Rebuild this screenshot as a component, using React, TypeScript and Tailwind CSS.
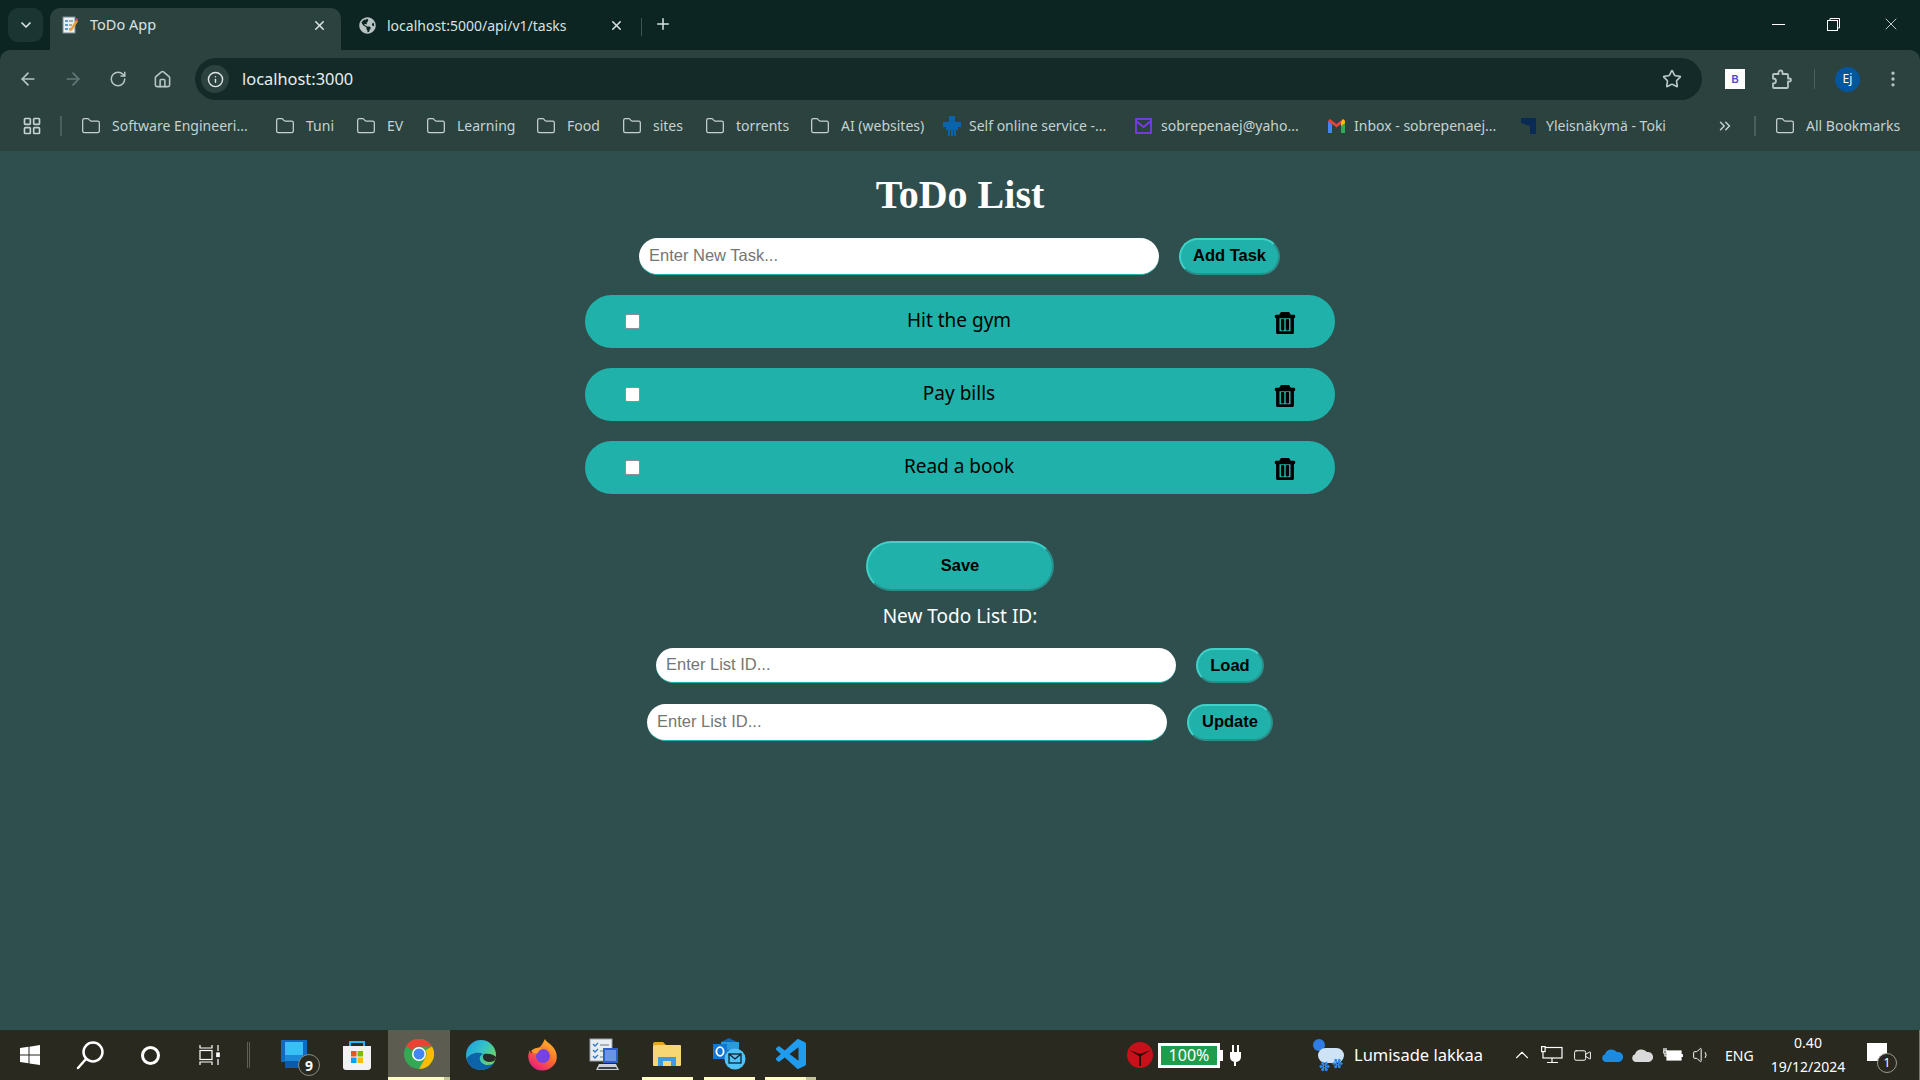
import { ArrowLeft, ArrowRight, ChevronDown, ChevronUp, ChevronsRight, Folder, Home, Info, LayoutGrid, MoreVertical, Plus, RotateCw, Snowflake, Star, Volume1, Video, X } from 'lucide-react';
import { FaGlobeAmericas, FaRegTrashAlt } from 'react-icons/fa';

const bookmarks = [
  { label: 'Software Engineeri...', width: 'w-[194px]' },
  { label: 'Tuni', width: 'w-[81px]' },
  { label: 'EV', width: 'w-[70px]' },
  { label: 'Learning', width: 'w-[110px]' },
  { label: 'Food', width: 'w-[86px]' },
  { label: 'sites', width: 'w-[83px]' },
  { label: 'torrents', width: 'w-[105px]' },
  { label: 'AI (websites)', width: 'w-[133px]' },
];

const tasks = ['Hit the gym', 'Pay bills', 'Read a book'];

const segoe = "font-['Noto_Sans',sans-serif]";
const arial = "font-['Liberation_Sans',Arial,sans-serif]";

function OutsetButton({ label, size }: { label: string; size: string }) {
  return (
    <button className={`${size} shrink-0 rounded-[20px] border-2 border-t-[#3fd0c8] border-l-[#3fd0c8] border-r-[#2a8f8a] border-b-[#2a8f8a] bg-[#20b2aa] pb-[1px] text-[16.5px] font-bold text-black ${arial}`}>
      {label}
    </button>
  );
}

function TextField({ placeholder, size }: { placeholder: string; size: string }) {
  return (
    <input
      placeholder={placeholder}
      className={`${size} shrink-0 rounded-[20px] border-b border-[#20b2aa] bg-white px-[10px] pb-[2px] text-[16.5px] text-black outline-none placeholder:text-[#757575] ${arial}`}
    />
  );
}

function Favicon() {
  return (
    <svg width="18" height="18" viewBox="0 0 18 18">
      <rect x="2" y="1" width="12" height="16" fill="#e8eef2" stroke="#7d8a96" />
      <path d="M4 5h3M4 9h3M4 13h3" stroke="#2f7fc4" strokeWidth="1.5" />
      <path d="M8 5h4M8 9h3M8 13h3" stroke="#5a6672" />
      <path d="M9 13l6-9 2 1.500-6 9-2.500 1z" fill="#e9a23b" />
      <path d="M14.500 3.500l1-1.500 2 1.500-1 1.500z" fill="#d8447a" />
    </svg>
  );
}

function WindowsLogo() {
  return (
    <svg width="20" height="20" viewBox="0 0 20 20" fill="#fff">
      <path d="M0 3l8.500-1.200v7.800H0zM9.500 1.700L20 0v9.600H9.500zM0 10.500h8.500v7.800L0 17zM9.500 10.500H20V20L9.500 18.400z" />
    </svg>
  );
}

function ChromeLogo() {
  return (
    <svg width="30" height="30" viewBox="0 0 30 30">
      <circle cx="15" cy="15" r="15" fill="#34a853" />
      <path d="M15 0a15 15 0 0 1 13 7.500H15a7.500 7.500 0 0 0-6.500 3.750L2 7A15 15 0 0 1 15 0z" fill="#ea4335" />
      <path d="M28 7.500A15 15 0 0 1 15 30l6.500-11.250A7.500 7.500 0 0 0 21.500 11.250z" fill="#fbbc04" />
      <circle cx="15" cy="15" r="7" fill="#fff" />
      <circle cx="15" cy="15" r="5.500" fill="#4285f4" />
    </svg>
  );
}

function EdgeLogo() {
  return (
    <svg width="30" height="30" viewBox="0 0 30 30">
      <defs>
        <linearGradient id="edgeTop" x1="0" y1="0" x2="1" y2="0.6">
          <stop offset="0" stopColor="#1b9de2" />
          <stop offset="0.55" stopColor="#35c1c8" />
          <stop offset="1" stopColor="#6fd858" />
        </linearGradient>
      </defs>
      <circle cx="15" cy="15" r="15" fill="url(#edgeTop)" />
      <path d="M1 18c0 8 7 12 14 12 5 0 10-2 13-7-4 3-12 3-14-3-1-3 1-5 3-6-6-3-13 0-16 4z" fill="#0c63a8" />
      <path d="M18 14c6-1 10 1 12 3 0 1-1 3-2 4-4 2-10 1-11-3-.4-2 .3-3 1-4z" fill="#29292a" />
    </svg>
  );
}

function FirefoxLogo() {
  return (
    <svg width="30" height="32" viewBox="0 0 30 32">
      <defs>
        <linearGradient id="ffBody" x1="0.8" y1="0" x2="0.2" y2="1">
          <stop offset="0" stopColor="#ffbd2e" />
          <stop offset="0.5" stopColor="#ff6a2b" />
          <stop offset="1" stopColor="#e31587" />
        </linearGradient>
      </defs>
      <path d="M17 0c1 3 5 4 8 8 5 6 5 14 0 19-6 6-16 6-21 0C0 23-1 16 2 11c0 2 1 3 2 3 1-3 3-4 5-5 3 0 5-3 8-9z" fill="url(#ffBody)" />
      <circle cx="15" cy="17" r="7" fill="#7542e5" />
      <path d="M3 12c4-4 9-4 11-2-2 1-4 2-4 4-3 1-5 0-7-2z" fill="#ff9a2e" />
    </svg>
  );
}

function TaskManagerIcon() {
  return (
    <svg width="32" height="34" viewBox="0 0 32 34">
      <rect x="1" y="1" width="22" height="22" fill="#e9edf2" stroke="#9aa3ad" />
      <path d="M4 6l2 2 3-3M4 12l2 2 3-3M4 18l2 2 3-3" stroke="#2d76c9" strokeWidth="1.300" fill="none" />
      <path d="M11 7h9M11 13h5M11 19h4" stroke="#6c7682" />
      <path d="M14 10h15v15H14z" fill="#2f5fc8" />
      <path d="M16 12h11v11H16z" fill="#6a94e6" />
      <path d="M10 26h17l3 6H7z" fill="#ccd2d8" />
      <path d="M10 29h17l1 2H9z" fill="#3b3f46" />
    </svg>
  );
}

function ExplorerIcon() {
  return (
    <svg width="28" height="24" viewBox="0 0 28 24">
      <path d="M0 2a2 2 0 0 1 2-2h8l3 3h-13z" fill="#e2a91d" />
      <rect y="3" width="28" height="21" rx="1" fill="#f7d774" />
      <path d="M5 24v-9h18v9h-5v-5h-8v5z" fill="#3f9ce0" />
    </svg>
  );
}

function OutlookIcon() {
  return (
    <svg width="33" height="32" viewBox="0 0 33 32">
      <path d="M8 4l8-4 10 5v14H8z" fill="#0f67b8" />
      <path d="M8 4h9v8H8zM17 4h9v8h-9z" fill="#2a9ad8" />
      <rect x="0" y="6" width="14" height="15" fill="#0f78d4" />
      <ellipse cx="7" cy="13.500" rx="3.600" ry="4.300" fill="none" stroke="#fff" strokeWidth="1.800" />
      <circle cx="22" cy="21" r="10.500" fill="#4fc3f7" />
      <rect x="16" y="16" width="12" height="9" fill="none" stroke="#10202c" strokeWidth="1.300" />
      <path d="M16 16l6 5 6-5" fill="none" stroke="#10202c" strokeWidth="1.300" />
    </svg>
  );
}

function VsCodeIcon() {
  return (
    <svg width="30" height="30" viewBox="0 0 24 24">
      <path fill="#1f9cf0" d="M23.15 2.587L18.21.21a1.494 1.494 0 0 0-1.705.29l-9.46 8.63-4.12-3.128a.999.999 0 0 0-1.276.057L.327 7.261A1 1 0 0 0 .326 8.74L3.899 12 .326 15.26a1 1 0 0 0 .001 1.479L1.65 17.94a.999.999 0 0 0 1.276.057l4.12-3.128 9.46 8.63a1.492 1.492 0 0 0 1.704.29l4.942-2.377A1.5 1.500 0 0 0 24 20.06V3.939a1.5 1.500 0 0 0-.85-1.352zm-5.146 14.861L10.826 12l7.178-5.448v10.896z" />
    </svg>
  );
}

function StoreIcon() {
  return (
    <svg width="30" height="30" viewBox="0 0 30 30">
      <path d="M8 7V2h14v5" fill="none" stroke="#29b6f6" strokeWidth="2" />
      <path d="M1 6h28v21a3 3 0 0 1-3 3H4a3 3 0 0 1-3-3z" fill="#f2f2f2" />
      <rect x="9" y="11" width="5.500" height="5.500" fill="#f25022" />
      <rect x="15.500" y="11" width="5.500" height="5.500" fill="#7fba00" />
      <rect x="9" y="17.500" width="5.500" height="5.500" fill="#00a4ef" />
      <rect x="15.500" y="17.500" width="5.500" height="5.500" fill="#ffb900" />
    </svg>
  );
}

function PhoneIcon() {
  return (
    <div className="relative ml-[10px] h-[30px] w-[40px]">
      <svg width="28" height="28" viewBox="0 0 28 28">
        <rect x="1" y="0" width="26" height="22" fill="#0f6cbd" />
        <rect x="5" y="2" width="18" height="26" fill="#0a5ca8" />
        <rect x="5" y="2" width="18" height="13" fill="#38c0f5" />
        <rect x="5" y="15" width="18" height="6" fill="#1a8ad8" />
      </svg>
      <span className={`absolute right-0 bottom-[-6px] flex h-[22px] w-[22px] items-center justify-center rounded-full border border-[#8c8c84] bg-[#29291f] text-[14px] font-bold text-white ${segoe}`}>9</span>
    </div>
  );
}

function Taskbar() {
  return (
    <div className={`flex h-[50px] shrink-0 items-center border-r border-r-[#77786c] bg-[#29291f] text-white ${segoe}`}>
      <div className="flex h-full w-[60px] items-center justify-center"><WindowsLogo /></div>
      <div className="flex h-full w-[60px] items-center justify-center">
        <svg width="30" height="30" viewBox="0 0 30 30" fill="none" stroke="#fff" strokeWidth="2.500">
          <circle cx="18" cy="12" r="9.500" />
          <path d="M11 19l-8 9" strokeLinecap="round" />
        </svg>
      </div>
      <div className="flex h-full w-[60px] items-center justify-center">
        <div className="h-[19px] w-[19px] rounded-full border-[3px] border-white" />
      </div>
      <div className="flex h-full w-[60px] items-center justify-center">
        <svg width="22" height="20" viewBox="0 0 22 20" fill="none" stroke="#fff" strokeWidth="1.200">
          <path d="M1 0v3h12V0M1 20v-3h12v3" />
          <rect x="1" y="5.500" width="12" height="9" />
          <path d="M19 0v6M19 14v6" />
          <rect x="17.800" y="8" width="2.400" height="3.500" fill="#fff" />
        </svg>
      </div>
      <div className="flex h-full w-[24px] items-center"><div className="ml-[7px] h-[26px] w-[3px] border-x border-x-[#5f6056]" /></div>
      <div className="flex h-full w-[62px] items-center justify-center"><PhoneIcon /></div>
      <div className="flex h-full w-[62px] items-center justify-center"><StoreIcon /></div>
      <div className="flex h-full w-[62px] flex-col bg-[#5c5d50]">
        <div className="flex flex-1 items-center justify-center"><ChromeLogo /></div>
        <div className="flex h-[3px]"><div className="h-full w-[56px] bg-[#fdfdc4]" /><div className="h-full flex-1 bg-[#c4c49a]" /></div>
      </div>
      <div className="flex h-full w-[62px] items-center justify-center"><EdgeLogo /></div>
      <div className="flex h-full w-[62px] items-center justify-center"><FirefoxLogo /></div>
      <div className="flex h-full w-[62px] items-center justify-center"><TaskManagerIcon /></div>
      <div className="flex h-full w-[62px] flex-col items-center">
        <div className="flex flex-1 items-center justify-center"><ExplorerIcon /></div>
        <div className="h-[3px] w-[51px] bg-[#fdfdc4]" />
      </div>
      <div className="flex h-full w-[62px] flex-col items-center">
        <div className="flex flex-1 items-center justify-center"><OutlookIcon /></div>
        <div className="h-[3px] w-[51px] bg-[#fdfdc4]" />
      </div>
      <div className="flex h-full w-[62px] flex-col">
        <div className="flex flex-1 items-center justify-center"><VsCodeIcon /></div>
        <div className="ml-[5px] flex h-[3px]"><div className="h-full w-[41px] bg-[#fdfdc4]" /><div className="h-full w-[10px] bg-[#c4c49a]" /></div>
      </div>

      <div className="ml-[305px] flex h-[26px] w-[26px] items-center justify-center rounded-full bg-[#c8101a]">
        <svg width="26" height="26" viewBox="0 0 26 26"><path d="M2 8l11 4 11-4-10 6v10h-2V14z" fill="#2a0a0a" /></svg>
      </div>
      <div className="ml-[5px] flex h-[25px] w-[62px] items-center justify-center border-[3px] border-white bg-[#1f9d4d] text-[16px] text-white">100%</div>
      <div className="h-[11px] w-[3px] bg-white" />
      <div className="ml-[4px] flex w-[16px] flex-col items-center">
        <div className="flex gap-[3px]"><div className="h-[7px] w-[2px] bg-white" /><div className="h-[7px] w-[2px] bg-white" /></div>
        <div className="h-[10px] w-[11px] rounded-b-[5px] bg-white" />
        <div className="h-[4px] w-[2px] bg-white" />
      </div>

      <div className="relative ml-[69px] h-[34px] w-[32px]">
        <div className="absolute top-[1px] left-[1px] h-[12px] w-[12px] rounded-full bg-[#2f7de1]" />
        <div className="absolute top-[10px] left-[6px] h-[15px] w-[26px] rounded-[8px] bg-[#cfe3f7]" />
        <Snowflake size={11} className="absolute bottom-0 left-[7px] text-[#2c8be8]" strokeWidth={3} />
        <Snowflake size={11} className="absolute bottom-[3px] left-[20px] text-[#2c8be8]" strokeWidth={3} />
      </div>
      <span className="ml-[10px] w-[140px] text-[16.500px] whitespace-nowrap">Lumisade lakkaa</span>

      <ChevronUp size={22} strokeWidth={1.200} className="ml-[17px] shrink-0" />
      <svg className="ml-[8px] shrink-0" width="22" height="18" viewBox="0 0 22 18" fill="none" stroke="#fff" strokeWidth="1.200">
        <rect x="2" y="1.500" width="19" height="10.500" />
        <path d="M11 12v4M6 16.500h11" />
        <rect x="0.600" y="0.600" width="3.500" height="5" fill="#29291f" />
      </svg>
      <Video size={19} strokeWidth={1.200} className="ml-[10px] shrink-0" />
      <svg className="ml-[10px] shrink-0" width="21" height="14" viewBox="0 0 21 14">
        <path d="M4 14a4 4 0 0 1-1-7.800A7 7 0 0 1 15 4a5 5 0 0 1 2 10z" fill="#1a8be0" />
      </svg>
      <svg className="ml-[9px] shrink-0" width="21" height="14" viewBox="0 0 21 14">
        <path d="M4 14a4 4 0 0 1-1-7.800A7 7 0 0 1 15 4a5 5 0 0 1 2 10z" fill="#d9d9d9" />
      </svg>
      <svg className="ml-[10px] shrink-0" width="20" height="14" viewBox="0 0 20 14" fill="none" stroke="#fff" strokeWidth="1.200">
        <rect x="4" y="3" width="14" height="9" fill="#fff" />
        <path d="M19 6v3" strokeWidth="1.800" />
        <path d="M1 0v3M3 0v3M0 3h4v2H0zM2 5v3h2" />
      </svg>
      <Volume1 size={20} strokeWidth={1.200} className="ml-[9px] shrink-0" />
      <span className="ml-[13px] w-[32px] text-[14px]">ENG</span>
      <div className="ml-[12px] flex w-[78px] shrink-0 flex-col items-center text-[14px] leading-[24px] whitespace-nowrap">
        <span>0.40</span>
        <span>19/12/2024</span>
      </div>
      <div className="relative ml-[20px] h-[24px] w-[30px]">
        <div className="h-[18px] w-[20px] bg-white" />
        <div className="absolute top-[10px] right-0 flex h-[20px] w-[20px] items-center justify-center rounded-full border border-[#9a9a92] bg-[#29291f] text-[12px]">1</div>
      </div>
    </div>
  );
}

function BrowserChrome() {
  return (
    <div className={`shrink-0 bg-[#0c2522] ${segoe}`}>
      {/* tab strip */}
      <div className="flex h-[50px] items-end text-[#d8e2e0]">
        <div className="mb-[8px] ml-[8px] flex h-[34px] w-[35px] items-center justify-center rounded-[10px] bg-[#1b3532]">
          <ChevronDown size={16} strokeWidth={2.500} />
        </div>
        <div className="ml-[7px] flex h-[42px] w-[291px] items-center rounded-t-[10px] bg-[#2b423f] pb-[8px] pl-[11px] text-[14.500px]">
          <Favicon />
          <span className="ml-[11px] flex-1">ToDo App</span>
          <X size={15} strokeWidth={2.500} className="mr-[14px]" />
        </div>
        <div className="flex h-[42px] w-[300px] items-center pb-[8px] pl-[18px] text-[14px]">
          <FaGlobeAmericas size={17} className="text-[#b7c4c2]" />
          <span className="ml-[11px] flex-1">localhost:5000/api/v1/tasks</span>
          <X size={15} strokeWidth={2.500} className="mr-[17px]" />
        </div>
        <div className="mb-[14px] h-[18px] w-px bg-[#3d5451]" />
        <Plus size={18} strokeWidth={2} className="mb-[17px] ml-[12px]" />
        <div className="mb-[16px] ml-auto flex items-center text-[#e6e6e6]">
          <div className="mr-[42px] h-px w-[13px] bg-white" />
          <svg className="mr-[41px]" width="13" height="13" viewBox="0 0 13 13" fill="none" stroke="#fff">
            <rect x="0.500" y="2.500" width="10" height="10" />
            <path d="M3 2.500V.5h9.500V10h-2" />
          </svg>
          <X size={20} strokeWidth={1} className="mr-[19px]" />
        </div>
      </div>

      {/* toolbar */}
      <div className="flex h-[58px] items-center rounded-t-[10px] bg-[#2b423f] pl-[5px] text-[#b7c6c4]">
        <div className="flex w-[45px] justify-center"><ArrowLeft size={20} /></div>
        <div className="flex w-[45px] justify-center text-[#64787a]"><ArrowRight size={20} /></div>
        <div className="flex w-[45px] justify-center"><RotateCw size={18} /></div>
        <div className="flex w-[45px] justify-center"><Home size={19} /></div>
        <div className="ml-[10px] flex h-[42px] w-[1507px] items-center rounded-full bg-[#132a28] pr-[20px] pl-[6px]">
          <div className="flex h-[28px] w-[28px] items-center justify-center rounded-full bg-[#2b423f]"><Info size={17} className="text-[#dfe7e6]" /></div>
          <span className="ml-[13px] flex-1 text-[16.400px] text-[#e8eeed]">localhost:3000</span>
          <Star size={20} />
        </div>
        <div className={`ml-[23px] flex h-[20px] w-[20px] items-center justify-center bg-white text-[10px] font-bold text-[#5546c8] ${arial}`}>B</div>
        <svg className="ml-[26px]" width="21" height="21" viewBox="0 0 21 21" fill="none" stroke="currentColor" strokeWidth="1.800" strokeLinejoin="round">
          <path d="M3 5h4.500V3.500a2 2 0 0 1 4 0V5H16a1 1 0 0 1 1 1v3.500h1.500a1.500 1.500 0 0 1 0 3H17V18a1 1 0 0 1-1 1H3a1 1 0 0 1-1-1v-3.500c2.500 0 3-1.500 3-2.500s-.5-2.500-3-2.500V6a1 1 0 0 1 1-1z" />
        </svg>
        <div className="ml-[22px] h-[20px] w-px bg-[#4a605d]" />
        <div className="ml-[20px] flex h-[25px] w-[25px] items-center justify-center rounded-full bg-[#05559f] text-[12px] text-white">Ej</div>
        <MoreVertical size={20} className="ml-[23px]" />
      </div>

      {/* bookmarks */}
      <div className="flex h-[43px] items-center border-b border-b-[#2b423f] bg-[#2b423f] pb-[7px] text-[14px] text-[#c5d2d0]">
        <LayoutGrid size={20} className="ml-[22px]" />
        <div className="mr-[19px] ml-[18px] h-[20px] w-[2px] bg-[#4a605d]" />
        {bookmarks.map((b) => (
          <div key={b.label} className={`flex shrink-0 items-center gap-[11px] ${b.width}`}>
            <Folder size={20} strokeWidth={1.500} />
            <span className="whitespace-nowrap">{b.label}</span>
          </div>
        ))}
        <div className="flex w-[192px] shrink-0 items-center gap-[8px]">
          <svg width="18" height="20" viewBox="0 0 18 20" fill="#0a63ad">
            <rect x="6" y="0" width="6" height="6" />
            <rect x="0" y="6" width="18" height="5" />
            <rect x="3" y="11" width="12" height="3" />
            <path d="M5 14h2v6H5zM8 14h2v6H8zM11 14h2v6h-2z" />
          </svg>
          <span className="whitespace-nowrap">Self online service -...</span>
        </div>
        <div className="flex w-[193px] shrink-0 items-center gap-[9px]">
          <svg width="17" height="16" viewBox="0 0 17 16" fill="none" stroke="#7c3aed" strokeWidth="1.800">
            <rect x="1" y="1" width="15" height="14" />
            <path d="M1 3l7.500 6L16 3" />
          </svg>
          <span className="whitespace-nowrap">sobrepenaej@yaho...</span>
        </div>
        <div className="flex w-[193px] shrink-0 items-center gap-[9px]">
          <svg width="17" height="14" viewBox="0 0 17 14">
            <path d="M0 2v12h4V5z" fill="#4285f4" />
            <path d="M13 5v9h4V2z" fill="#34a853" />
            <path d="M0 2l8.500 6.500L17 2l-2-2-6.500 5L2 0z" fill="#ea4335" />
            <path d="M15 0l2 2v2l-4 3V3z" fill="#fbbc04" />
          </svg>
          <span className="whitespace-nowrap">Inbox - sobrepenaej...</span>
        </div>
        <div className="flex w-[195px] shrink-0 items-center gap-[10px]">
          <svg width="15" height="16" viewBox="0 0 15 16" fill="#082a55"><path d="M0 0h15v16H9V8L0 5z" /></svg>
          <span className="whitespace-nowrap">Yleisnäkymä - Toki</span>
        </div>
        <ChevronsRight size={18} />
        <div className="ml-[20px] h-[20px] w-[2px] bg-[#4a605d]" />
        <div className="ml-[19px] flex items-center gap-[11px]">
          <Folder size={20} strokeWidth={1.500} />
          <span className="whitespace-nowrap">All Bookmarks</span>
        </div>
      </div>
    </div>
  );
}

export default function App() {
  return (
    <div className="flex h-screen w-full flex-col overflow-hidden bg-[#2f4f4f]">
      <BrowserChrome />

      <main className="flex flex-1 flex-col items-center">
        <h1 className="mt-[21px] h-[46px] font-['Liberation_Serif','Times_New_Roman',serif] text-[40px] leading-[46px] font-bold text-white">ToDo List</h1>

        <div className="mt-[20px] flex gap-[20px] pr-[1px]">
          <TextField placeholder="Enter New Task..." size="h-[37px] w-[520px]" />
          <OutsetButton label="Add Task" size="h-[37px] w-[101px] !pb-[3px]" />
        </div>

        <div className="mt-[20px] flex flex-col gap-[20px]">
          {tasks.map((task) => (
            <div key={task} className="flex h-[53px] w-[750px] items-center rounded-[30px] bg-[#20b2aa] pl-[40px] text-black">
              <input type="checkbox" className="mb-[1px] h-[15px] w-[15px] appearance-none rounded-[2px] border border-[#8f8f8f] bg-white" />
              <span className={`flex-1 pb-[3px] pl-[4px] text-center text-[19px] ${segoe}`}>{task}</span>
              <FaRegTrashAlt size={22} stroke="currentColor" strokeWidth={30} className="mt-[3px] mr-[39px]" />
            </div>
          ))}
        </div>

        <OutsetButton label="Save" size="mt-[47px] h-[50px] w-[188px] !rounded-[25px]" />
        <div className={`mt-[12px] h-[27px] text-[19px] leading-[27px] text-white ${segoe}`}>New Todo List ID:</div>

        <div className="mt-[18px] flex gap-[20px]">
          <TextField placeholder="Enter List ID..." size="h-[35px] w-[520px]" />
          <OutsetButton label="Load" size="h-[35px] w-[68px]" />
        </div>
        <div className="mt-[21px] flex gap-[20px]">
          <TextField placeholder="Enter List ID..." size="h-[37px] w-[520px]" />
          <OutsetButton label="Update" size="h-[37px] w-[86px] !pb-[3px]" />
        </div>
      </main>

      <Taskbar />
    </div>
  );
}
